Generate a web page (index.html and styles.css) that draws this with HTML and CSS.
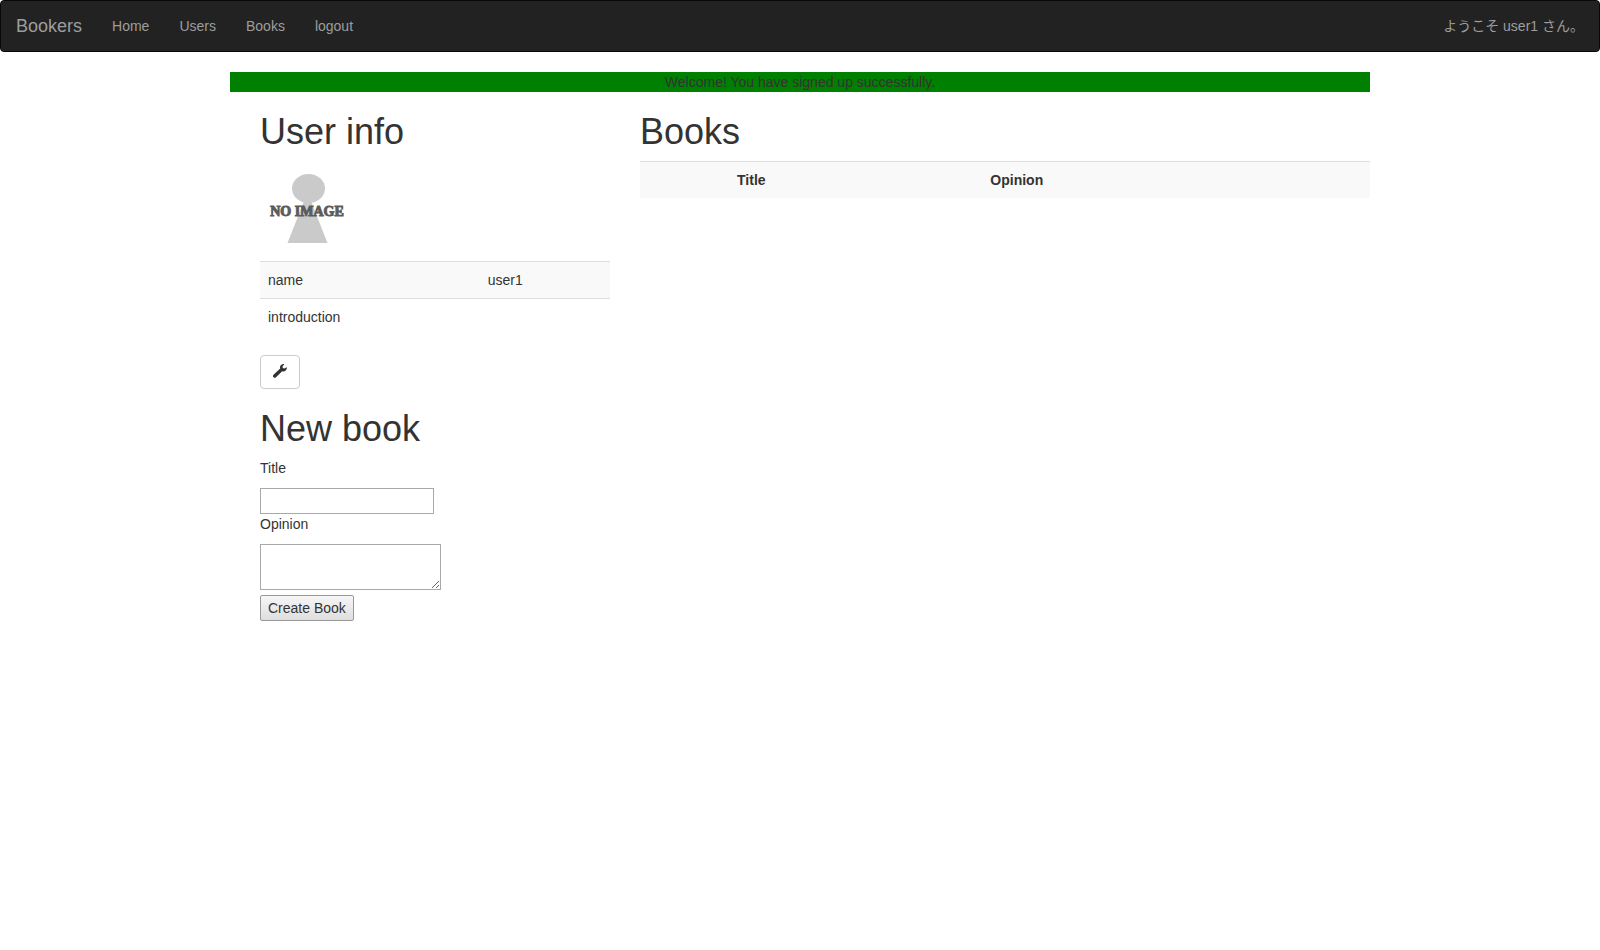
FILE: index.html
```html
<!DOCTYPE html>
<html lang="ja">
<head>
<meta charset="utf-8">
<title>Bookers</title>
<link rel="stylesheet" href="styles.css">
</head>
<body>
<nav class="navbar">
  <a class="brand" href="#">Bookers</a>
  <a class="nav-link" href="#">Home</a>
  <a class="nav-link" href="#">Users</a>
  <a class="nav-link" href="#">Books</a>
  <a class="nav-link" href="#">logout</a>
  <p class="greeting">ようこそ user1 さん。</p>
</nav>
<main class="container">
  <div class="notice" role="status">Welcome! You have signed up successfully.</div>
  <div class="columns">
    <section class="sidebar">
      <h1>User info</h1>
      <svg class="avatar" viewBox="0 0 96 100" role="img" aria-label="No image">
        <path d="M44 40H51L67.500 82H27.500Z" fill="#cacaca"/>
        <ellipse cx="48.500" cy="27.500" rx="16.500" ry="14.500" fill="#cacaca"/>
        <text class="avatar-text" x="47" y="55" text-anchor="middle">NO IMAGE</text>
      </svg>
      <table class="table profile">
        <tbody>
          <tr><td class="profile-key">name</td><td>user1</td></tr>
          <tr><td>introduction</td><td></td></tr>
        </tbody>
      </table>
      <a class="edit-button" href="#" aria-label="Edit profile">
        <svg class="wrench" viewBox="0 0 14 14" aria-hidden="true">
          <path d="M11.300.2C9.500-.3 7.600.8 7.100 2.600c-.2.700-.1 1.300.1 1.900L.5 10.700c-.7.700-.7 1.800 0 2.500s1.800.7 2.500 0l6.200-5.900c2.200.7 4.500-.8 4.800-3.500l-.2-.6-2.300 1.400-1.700-.7-.2-1.700Z" fill="#333"/>
        </svg>
      </a>
      <h1>New book</h1>
      <form class="book-form">
        <label for="title">Title</label>
        <input class="text-field" id="title" type="text">
        <label for="opinion">Opinion</label>
        <textarea class="text-area" id="opinion"></textarea>
        <button class="submit" type="button">Create Book</button>
      </form>
    </section>
    <section class="books">
      <h1>Books</h1>
      <table class="table">
        <thead>
          <tr><th class="cover-col"></th><th class="title-col">Title</th><th>Opinion</th></tr>
        </thead>
      </table>
    </section>
  </div>
</main>
</body>
</html>
```
FILE: styles.css
```css
* { box-sizing: border-box; }
body {
  margin: 0;
  background: #fff;
  color: #333;
  font: 14px/20px "Liberation Sans", "Noto Sans CJK JP", sans-serif;
}
.navbar {
  display: flex;
  min-height: 52px;
  margin-bottom: 20px;
  background: #222;
  border: 1px solid #080808;
  border-radius: 4px;
  color: #9d9d9d;
}
.navbar a { color: inherit; text-decoration: none; padding: 15px; }
.navbar .brand { font-size: 18px; }
.greeting { margin: 0 0 0 auto; padding: 15px; }
.container { max-width: 1140px; margin: 0 auto; }
.notice { background: green; text-align: center; }
.columns { display: grid; grid-template-columns: 1fr 2fr; }
.sidebar, .books { padding-left: 30px; min-width: 0; }
h1 { margin: 20px 0 10px; font-size: 36px; line-height: 39px; font-weight: 500; }
.avatar { display: block; width: 96px; height: 100px; }
.avatar-text {
  font: bold 14px "Liberation Serif", serif;
  fill: #5c5c5c;
  stroke: #5c5c5c;
  stroke-width: 1px;
}
.table { width: 100%; margin-bottom: 20px; border-collapse: collapse; table-layout: fixed; }
.table th, .table td { padding: 8px; border-top: 1px solid #ddd; text-align: left; vertical-align: top; }
.table tr:nth-child(odd) { background: #f9f9f9; }
.profile-key { width: 62.8%; }
.cover-col { width: 12.2%; }
.title-col { width: 34.7%; }
.edit-button {
  display: inline-flex;
  justify-content: center;
  width: 40px;
  height: 34px;
  padding-top: 8px;
  border: 1px solid #ccc;
  border-radius: 4px;
  vertical-align: top;
}
.wrench { width: 14px; height: 14px; }
.book-form { display: flex; flex-direction: column; align-items: flex-start; }
.book-form label { margin-bottom: 10px; }
.text-field, .text-area {
  appearance: none;
  border: 1px solid #a9a9a9;
  border-radius: 0;
  background: #fff;
  color: inherit;
  font: inherit;
}
.text-field { width: 174px; height: 26px; padding: 2px; }
.text-area { width: 181px; height: 46px; padding: 2px; margin-bottom: 5px; }
.submit {
  height: 26px;
  padding: 0 7px;
  border: 1px solid #999;
  border-radius: 2px;
  background: linear-gradient(#f6f6f6, #dedede);
  color: inherit;
  font: inherit;
}
```
